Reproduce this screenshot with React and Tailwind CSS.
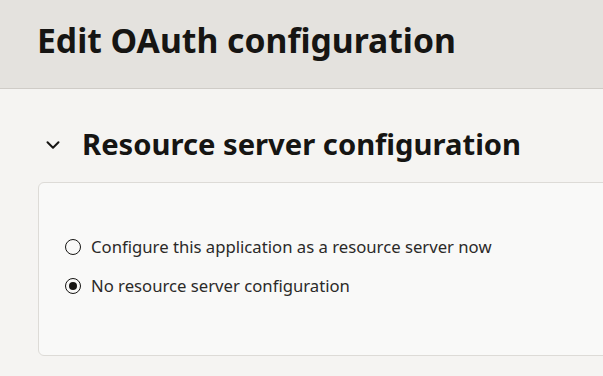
import { ChevronDown } from 'lucide-react';

function Radio({ checked, label }) {
  return (
    <label className="flex items-center gap-[10px] h-[24px] text-[16.7px] text-[#2b2a28]">
      <span className="w-[16px] h-[16px] rounded-full border-[1.5px] border-[#161513] flex items-center justify-center shrink-0">
        {checked && <span className="w-[8px] h-[8px] rounded-full bg-[#161513]" />}
      </span>
      {label}
    </label>
  );
}

export default function App() {
  return (
    <div className="w-[603px] h-[376px] overflow-hidden bg-[#f5f4f2] text-[#161513]" style={{ fontFamily: '"Noto Sans", "Open Sans", sans-serif' }}>
      <header className="h-[89px] bg-[#e4e2de] border-b border-[#cfccc7] flex items-center pl-[37px]">
        <h1 className="text-[33.7px] font-bold leading-none -mt-[6px]">Edit OAuth configuration</h1>
      </header>

      <section className="pl-[38px] pt-[36px]">
        <div className="flex items-center h-[40px]">
          <ChevronDown size={22} strokeWidth={2.2} className="ml-[4px] text-[#161513]" />
          <h2 className="ml-[18px] text-[29.2px] font-bold leading-none">Resource server configuration</h2>
        </div>
        <div className="mt-[17px] h-[174px] w-[600px] bg-[#f9f9f8] border border-[#dddbd7] rounded-[6px] pl-[26px] pt-[52px] flex flex-col gap-[15px]">
          <Radio label="Configure this application as a resource server now" />
          <Radio checked label="No resource server configuration" />
        </div>
      </section>
    </div>
  );
}
